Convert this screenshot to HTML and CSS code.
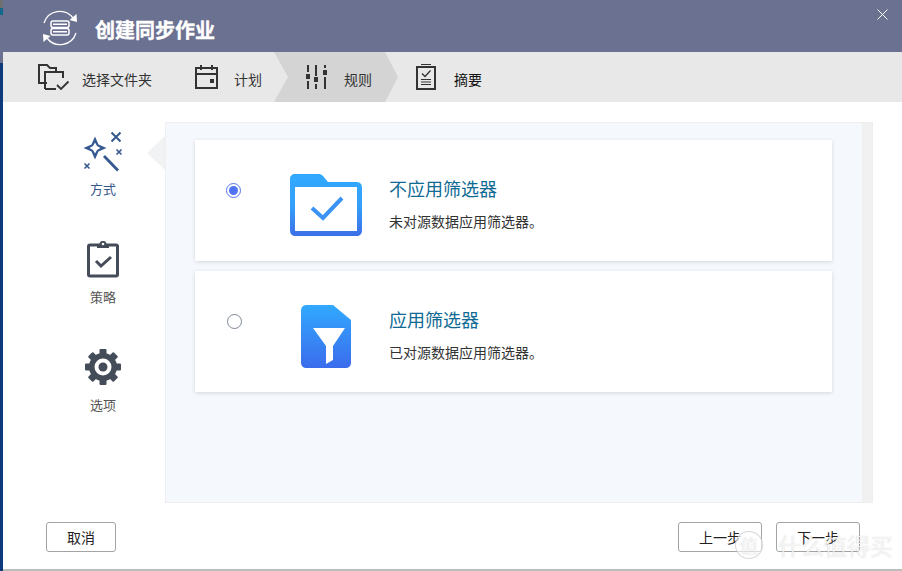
FILE: index.html

```html
<!DOCTYPE html>
<html lang="en">
<head>
    <meta charset="UTF-8">
    <meta name="viewport" content="width=device-width, initial-scale=1.0">
    <title>创建同步作业</title>
    <link rel="stylesheet" href="styles.css">
</head>
<body>
    <div class="desktop-edge"></div>

    <div class="dialog">
        <!-- Title bar -->
        <div class="title-bar">
            <svg class="title-icon" width="36" height="36" viewBox="0 0 36 36" fill="none" stroke="#fff" stroke-width="1.3">
                <path d="M2 13A16.500 16.500 0 0 1 31 8"/>
                <path d="M34.500 4L35 12L27.500 10Z" fill="#fff" stroke="none"/>
                <path d="M34 23A16.500 16.500 0 0 1 5 28"/>
                <path d="M1.500 32L1 24L8.500 26Z" fill="#fff" stroke="none"/>
                <rect x="9" y="11" width="18" height="6.500" rx="2" stroke-width="1.500"/>
                <rect x="9" y="18.500" width="18" height="6.500" rx="2" stroke-width="1.500"/>
                <path d="M11 14.300H25M11 21.800H25" stroke-width="1.500"/>
            </svg>
            <span class="title-text">创建同步作业</span>
            <svg class="close-icon" width="11" height="11" viewBox="0 0 11 11" stroke="#fff" stroke-width="1">
                <path d="M0.500 0.500L10.500 10.500M10.500 0.500L0.500 10.500"/>
            </svg>
        </div>

        <!-- Steps -->
        <div class="steps">
            <div class="step step-folder">
                <svg width="32" height="27" viewBox="0 0 32 27" fill="none" stroke="#333" stroke-width="2">
                    <path d="M9 19H1V1H9L12 4H18V7"/>
                    <path d="M7 25V8H25V14"/>
                    <path d="M7 25H18"/>
                    <path d="M19 21L23 25L30.500 17.500" stroke-width="1.800"/>
                </svg>
                <span>选择文件夹</span>
            </div>
            <div class="step step-plan">
                <svg width="23" height="24" viewBox="0 0 23 24" fill="none" stroke="#333" stroke-width="2">
                    <rect x="1" y="3" width="21" height="20"/>
                    <path d="M1 9H22" />
                    <path d="M6 0V5M17 0V5"/>
                    <rect x="15" y="14" width="4" height="4" fill="#333" stroke="none"/>
                </svg>
                <span>计划</span>
            </div>
            <div class="step step-rule active">
                <svg width="21" height="24" viewBox="0 0 21 24" fill="#333">
                    <rect x="1" y="0" width="2" height="7"/>
                    <rect x="0" y="9" width="4" height="5"/>
                    <rect x="1" y="16" width="2" height="8"/>
                    <rect x="9" y="0" width="2" height="11"/>
                    <rect x="8" y="12" width="4" height="5"/>
                    <rect x="9" y="19" width="2" height="5"/>
                    <rect x="18" y="0" width="2" height="3"/>
                    <rect x="17" y="5" width="4" height="5"/>
                    <rect x="18" y="12" width="2" height="12"/>
                </svg>
                <span>规则</span>
            </div>
            <div class="step step-summary">
                <svg width="20" height="26" viewBox="0 0 20 26" fill="none" stroke="#333">
                    <path d="M5 0.500H15" stroke-width="1"/>
                    <rect x="1" y="3" width="18" height="22" stroke-width="2"/>
                    <path d="M6 9.500L9 12.500L14.500 6.500" stroke-width="1.300"/>
                    <path d="M5 15.500H15M5 18H15M5 20.500H15" stroke-width="1"/>
                </svg>
                <span>摘要</span>
            </div>
        </div>

        <!-- Main area -->
        <div class="main">
            <div class="sidebar">
                <div class="side-item side-active">
                    <svg width="40" height="42" viewBox="0 0 40 42" fill="#34588f">
                        <path fill-rule="evenodd" d="M12 6.500L15.500 14.500L23.500 18L15.500 21.500L12 29.500L8.500 21.500L0.500 18L8.500 14.500ZM12 12.500L10 16L6.500 18L10 20L12 23.500L14 20L17.500 18L14 16Z"/>
                        <path d="M28.500 2.500L37.500 11.500M37.500 2.500L28.500 11.500" fill="none" stroke="#34588f" stroke-width="2"/>
                        <path d="M33.500 19.500L38.500 24.500M38.500 19.500L33.500 24.500" stroke="#34588f" stroke-width="1.600"/>
                        <path d="M1.500 33.500L6.500 38.500M6.500 33.500L1.500 38.500" stroke="#34588f" stroke-width="1.600"/>
                        <path d="M20 27L22 25L36 39.500L34 41.500Z"/>
                    </svg>
                    <span>方式</span>
                </div>
                <div class="side-item">
                    <svg width="32" height="38" viewBox="0 0 32 38" fill="none" stroke="#444c5a" stroke-width="3">
                        <path d="M10 5H3C2 5 1.500 5.500 1.500 6.500V34.500C1.500 35.500 2 36 3 36H29C30 36 30.500 35.500 30.500 34.500V6.500C30.500 5.500 30 5 29 5H22"/>
                        <path d="M10 3.500H12.500C13 1.500 14.500 1 16 1C17.500 1 19 1.500 19.500 3.500H22V8H10Z" fill="#444c5a" stroke="none"/>
                        <circle cx="16" cy="4" r="1.300" fill="#fff" stroke="none"/>
                        <path d="M9 21L14 26L24 17"/>
                    </svg>
                    <span>策略</span>
                </div>
                <div class="side-item">
                    <svg width="36" height="36" viewBox="0 0 36 36" fill="#444c5a">
                        <circle cx="18" cy="18" r="14"/>
                        <rect x="14.500" y="0" width="7" height="8" rx="1"/>
                        <rect x="14.500" y="0" width="7" height="8" rx="1" transform="rotate(45 18 18)"/>
                        <rect x="14.500" y="0" width="7" height="8" rx="1" transform="rotate(90 18 18)"/>
                        <rect x="14.500" y="0" width="7" height="8" rx="1" transform="rotate(135 18 18)"/>
                        <rect x="14.500" y="0" width="7" height="8" rx="1" transform="rotate(180 18 18)"/>
                        <rect x="14.500" y="0" width="7" height="8" rx="1" transform="rotate(225 18 18)"/>
                        <rect x="14.500" y="0" width="7" height="8" rx="1" transform="rotate(270 18 18)"/>
                        <rect x="14.500" y="0" width="7" height="8" rx="1" transform="rotate(315 18 18)"/>
                        <circle cx="18" cy="18" r="8.500" fill="#fff"/>
                        <circle cx="18" cy="18" r="4.500"/>
                    </svg>
                    <span>选项</span>
                </div>
            </div>

            <div class="panel">
                <div class="panel-list">
                    <div class="option-card">
                        <div class="radio checked"></div>
                        <div class="option-icon icon-folder">
                            <svg width="72" height="62" viewBox="0 0 72 62">
                                <defs>
                                    <linearGradient id="folderFill" x1="0" y1="0" x2="0" y2="1">
                                        <stop offset="0" stop-color="#31a9ff"/>
                                        <stop offset="0.500" stop-color="#34a0fb"/>
                                        <stop offset="1" stop-color="#3d6fe8"/>
                                    </linearGradient>
                                </defs>
                                <path fill="url(#folderFill)" fill-rule="evenodd" d="M5 0H29C31 0 32 1 33 2L38 8H66C70 8 72 10 72 14V56C72 60 70 62 66 62H6C2 62 0 60 0 56V5C0 2 2 0 5 0ZM5 13V57H67V13Z"/>
                                <path d="M22 34L33 44L52 24" fill="none" stroke="#3a93f5" stroke-width="4"/>
                            </svg>
                        </div>
                        <div class="option-text">
                            <div class="option-title">不应用筛选器</div>
                            <div class="option-desc">未对源数据应用筛选器。</div>
                        </div>
                    </div>
                    <div class="option-card">
                        <div class="radio radio-off"></div>
                        <div class="option-icon icon-file">
                            <svg width="50" height="63" viewBox="0 0 50 63">
                                <defs>
                                    <linearGradient id="fileFill" x1="0" y1="0" x2="0" y2="1">
                                        <stop offset="0" stop-color="#31a9ff"/>
                                        <stop offset="1" stop-color="#3b6cec"/>
                                    </linearGradient>
                                </defs>
                                <path fill="url(#fileFill)" d="M6 0H32L50 15V57C50 61 48 63 44 63H6C2 63 0 61 0 57V6C0 2 2 0 6 0Z"/>
                                <path fill="#fff" d="M12 23H44L32 41V55L25 59V41Z"/>
                            </svg>
                        </div>
                        <div class="option-text">
                            <div class="option-title">应用筛选器</div>
                            <div class="option-desc">已对源数据应用筛选器。</div>
                        </div>
                    </div>
                </div>
                <div class="panel-scroll"></div>
            </div>
        </div>

        <!-- Footer buttons -->
        <div class="footer">
            <button class="btn btn-cancel">取消</button>
            <div class="footer-right">
                <button class="btn">上一步</button>
                <button class="btn">下一步</button>
            </div>
        </div>
    </div>

    <!-- Site watermark over the screenshot -->
    <div class="watermark">
        <span class="watermark-badge">值</span>
        <span class="watermark-text">什么值得买</span>
    </div>
</body>
</html>
```

FILE: styles.css

```css
html, body {
    height: 100%;
}

body {
    font-family: "Noto Sans CJK SC", "Noto Sans", sans-serif;
    background-color: #fff;
    display: flex;
    height: 571px;
    margin: 0;
    overflow: hidden;
    position: relative;
}

.desktop-edge {
    width: 3px;
    flex: none;
    background: linear-gradient(#707070 0, #707070 8px, #14688c 8px, #14688c 15px, #6b7190 15px, #6b7190 63px, #0c3a7a 63px, #0c3a7a 100%);
}

.dialog {
    flex: 1;
    display: flex;
    flex-direction: column;
    border-bottom: 2px solid #bdbdbd;
    min-width: 0;
}

.title-bar {
    height: 52px;
    flex: none;
    background-color: #6b7190;
    display: flex;
    align-items: center;
    padding-left: 39px;
    position: relative;
}

.title-icon {
    margin-top: 3px;
}

.title-text {
    margin-left: 17px;
    margin-top: 6px;
    color: #fff;
    font-size: 20px;
    font-weight: 700;
    -webkit-text-stroke: 0.4px #fff;
}

.close-icon {
    position: absolute;
    top: 9px;
    right: 14px;
}

.steps {
    height: 50px;
    flex: none;
    background-color: #e8e8e8;
    display: flex;
    padding-left: 35px;
}

.step {
    height: 50px;
    display: flex;
    align-items: center;
    position: relative;
    font-size: 14px;
    color: #333;
}

.step svg,
.step span {
    position: relative;
}

.step span {
    top: 2px;
}

.step-folder span {
    margin-left: 12px;
}

.step-plan {
    margin-left: 43px;
}

.step-plan span {
    margin-left: 16px;
}

.step-rule {
    margin-left: 44px;
}

.step-rule span {
    margin-left: 17px;
}

.step-summary {
    margin-left: 44px;
}

.step-summary span {
    margin-left: 18px;
    color: #111;
}

/* chevron behind the current step */
.step.active::before {
    content: "";
    position: absolute;
    left: -32px;
    top: 0;
    width: 124px;
    height: 50px;
    background-color: #d4d4d4;
    clip-path: polygon(0 0, 111px 0, 124px 50%, 111px 100%, 0 100%, 14px 50%);
}

.main {
    flex: 1;
    display: flex;
    padding-top: 20px;
    min-height: 0;
}

.sidebar {
    width: 162px;
    flex: none;
    padding-left: 42px;
    padding-top: 8px;
    box-sizing: border-box;
    position: relative;
}

.sidebar::after {
    content: "";
    position: absolute;
    right: 0;
    top: 14px;
    border-style: solid;
    border-width: 17px 18px 17px 0;
    border-color: transparent #f0f2f4 transparent transparent;
}

.side-item {
    width: 116px;
    height: 108px;
    display: flex;
    flex-direction: column;
    align-items: center;
    color: #555;
    font-size: 13px;
}

.side-item svg {
    height: 42px;
    flex: none;
}

.side-item span {
    margin-top: 7px;
}

.side-active {
    color: #34588f;
}

.panel {
    width: 708px;
    height: 381px;
    flex: none;
    box-sizing: border-box;
    background-color: #f5f8fd;
    border: 1px solid #eeeeee;
    display: flex;
}

.panel-list {
    flex: 1;
    padding: 17px 30px 0 29px;
    display: flex;
    flex-direction: column;
    gap: 10px;
}

.panel-scroll {
    width: 10px;
    background-color: #f1f1f1;
}

.option-card {
    height: 121px;
    background-color: #fff;
    box-shadow: 0 1px 4px rgba(0, 0, 0, 0.14);
    display: flex;
    align-items: center;
    position: relative;
}

.radio {
    width: 13px;
    height: 13px;
    border: 1.500px solid #7c8794;
    border-radius: 50%;
    margin-left: 31px;
    flex: none;
    position: relative;
    top: -10px;
}

.radio-off {
    left: 1px;
}

.radio.checked {
    border-color: #5577f0;
}

.radio.checked::after {
    content: "";
    position: absolute;
    left: 2px;
    top: 2px;
    width: 9px;
    height: 9px;
    border-radius: 50%;
    background-color: #4f74f5;
}

.option-icon {
    width: 72px;
    margin-left: 49px;
    flex: none;
    display: flex;
    justify-content: center;
    position: relative;
    top: 4px;
}

.icon-file {
    top: 5px;
}

.option-text {
    margin-left: 27px;
    position: relative;
    top: 3px;
}

.option-title {
    font-size: 18px;
    line-height: 24px;
    color: #0f6a94;
}

.option-desc {
    margin-top: 11px;
    font-size: 14px;
    line-height: 20px;
    color: #333;
}

.footer {
    flex: none;
    height: 67px;
    display: flex;
    justify-content: space-between;
    padding: 20px 42px 0 43px;
    box-sizing: border-box;
}

.footer-right {
    display: flex;
    gap: 14px;
}

.btn {
    width: 84px;
    height: 30px;
    background-color: #fff;
    border: 1px solid #a3a3a3;
    border-radius: 3px;
    font-family: inherit;
    font-size: 14px;
    color: #222;
    padding: 0;
}

.btn-cancel {
    width: 70px;
}

.watermark {
    position: absolute;
    left: 735px;
    top: 531px;
    display: flex;
    align-items: center;
    gap: 15px;
    color: rgba(255, 255, 255, 0.78);
    text-shadow: 0 0 1px rgba(90, 90, 90, 0.3);
}

.watermark-badge {
    width: 26px;
    height: 26px;
    border: 1px solid rgba(190, 190, 190, 0.6);
    border-radius: 50%;
    background-color: rgba(255, 255, 255, 0.6);
    font-size: 18px;
    line-height: 26px;
    text-align: center;
}

.watermark-text {
    font-size: 23px;
    line-height: 28px;
}
```
